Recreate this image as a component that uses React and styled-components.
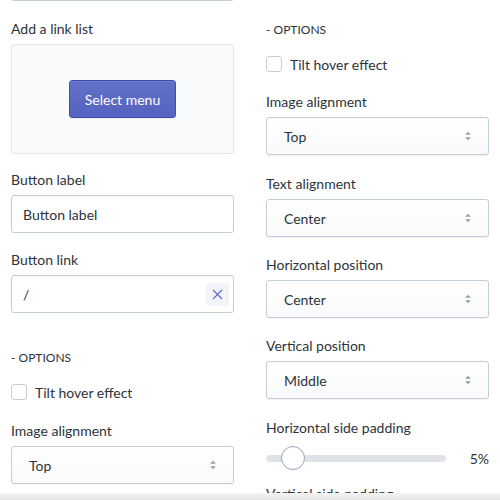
import styled, { createGlobalStyle } from 'styled-components';

const GlobalStyle = createGlobalStyle`
    html, body {
        margin: 0;
        padding: 0;
        background: #FFFFFF;
        overflow: hidden;
    }

    body {
        font-family: 'Lato', 'Open Sans', sans-serif;
        font-size: 14px;
        color: #2C333B;
    }

    * {
        box-sizing: border-box;
    }
`;

// slider position as a fraction of the track
const paddingFraction = 0.15;

export default function App() {
    return (
        <>
        <GlobalStyle />
        <Page>
            <Column>
                <CutField>
                    <TextBox />
                </CutField>
                <Field top={18}>
                    <Label>Add a link list</Label>
                    <LinkListBox>
                        <PrimaryButton>Select menu</PrimaryButton>
                    </LinkListBox>
                </Field>
                <Field top={16}>
                    <Label>Button label</Label>
                    <TextBox>Button label</TextBox>
                </Field>
                <Field top={17}>
                    <Label>Button link</Label>
                    <TextBox>
                        <span>/</span>
                        <ClearButton>
                            <svg width="11" height="11" viewBox="0 0 11 11">
                                <path d="M1 1 L10 10 M10 1 L1 10" stroke="#5C6AC4" strokeWidth="1.1" fill="none" />
                            </svg>
                        </ClearButton>
                    </TextBox>
                </Field>
                <Options top={35} />
                <SelectField top={19} label="Image alignment" value="Top" />
            </Column>
            <Column>
                <Options top={20} />
                <SelectField top={18} label="Image alignment" value="Top" />
                <SelectField top={19} label="Text alignment" value="Center" />
                <SelectField top={18} label="Horizontal position" value="Center" />
                <SelectField top={18} label="Vertical position" value="Middle" />
                <Field top={19}>
                    <Label>Horizontal side padding</Label>
                    <RangeRow>
                        <Track>
                            <Thumb style={{ left: `${paddingFraction * 100}%` }} />
                        </Track>
                        <RangeValue>5%</RangeValue>
                    </RangeRow>
                </Field>
                <Field top={11}>
                    <Label>Vertical side padding</Label>
                </Field>
            </Column>
        </Page>
        <BottomShade />
        </>
    );
}

function Options({ top }) {
    return (
        <OptionsBlock top={top}>
            <SectionTitle>- OPTIONS</SectionTitle>
            <CheckRow>
                <CheckBox />
                <span>Tilt hover effect</span>
            </CheckRow>
        </OptionsBlock>
    );
}

function SelectField({ top, label, value }) {
    return (
        <Field top={top}>
            <Label>{label}</Label>
            <SelectBox>
                <span>{value}</span>
                <svg width="8" height="12" viewBox="0 0 8 12">
                    <path d="M4 1.8 L6.8 4.8 L1.2 4.8 Z M4 10.2 L6.8 7.2 L1.2 7.2 Z" fill="#919EAB" />
                </svg>
            </SelectBox>
        </Field>
    );
}

const Page = styled.div`
    width: 500px;
    height: 500px;
    display: grid;
    grid-template-columns: 223px 223px;
    column-gap: 32px;
    padding: 0 11px;
    overflow: hidden;
`;

const Column = styled.div`
    display: flex;
    flex-direction: column;
`;

const CutField = styled.div`
    margin-top: -37px;
`;

const Field = styled.div`
    display: flex;
    flex-direction: column;
    gap: 5px;
    margin-top: ${props => props.top ?? 18}px;
`;

const Label = styled.div`
    height: 20px;
    line-height: 20px;
    font-size: 14px;
    color: #2C333B;
`;

const TextBox = styled.div`
    height: 38px;
    display: flex;
    align-items: center;
    justify-content: space-between;
    padding: 0 4px 0 11px;
    background: #FFFFFF;
    border: 1px solid #C4CDD5;
    border-radius: 3px;
    box-shadow: inset 0 1px 0 0 rgba(99, 115, 129, 0.05);
    font-size: 14px;
    color: #2C333B;
`;

const ClearButton = styled.div`
    width: 23px;
    height: 23px;
    display: flex;
    align-items: center;
    justify-content: center;
    background: #F3F4FA;
    border-radius: 3px;
`;

const LinkListBox = styled.div`
    height: 110px;
    display: flex;
    align-items: center;
    justify-content: center;
    background: #F9FAFB;
    border: 1px solid #E4E7EB;
    border-radius: 3px;
`;

const PrimaryButton = styled.button`
    width: 107px;
    height: 38px;
    background: linear-gradient(180deg, #6371C7, #5563C1);
    border: 1px solid #3F4EAE;
    border-radius: 3px;
    box-shadow: inset 0 1px 0 0 #6F7BCB, 0 1px 0 0 rgba(22, 29, 37, 0.05);
    font-family: 'Lato', 'Open Sans', sans-serif;
    font-size: 14px;
    color: #FFFFFF;
    padding: 0;
`;

const OptionsBlock = styled.div`
    display: flex;
    flex-direction: column;
    margin-top: ${props => props.top}px;
`;

const SectionTitle = styled.div`
    height: 20px;
    line-height: 20px;
    font-size: 12px;
    color: #2C333B;
`;

const CheckRow = styled.div`
    display: flex;
    align-items: center;
    gap: 8px;
    margin-top: 14px;
    height: 20px;
    font-size: 14px;
`;

const CheckBox = styled.div`
    width: 16px;
    height: 16px;
    background: #FFFFFF;
    border: 1px solid #C4CDD5;
    border-radius: 3px;
`;

const SelectBox = styled.div`
    height: 38px;
    display: flex;
    align-items: center;
    justify-content: space-between;
    padding: 0 16px 0 17px;
    background: linear-gradient(180deg, #FFFFFF, #F9FAFB);
    border: 1px solid #C4CDD5;
    border-radius: 3px;
    box-shadow: 0 1px 0 0 rgba(22, 29, 37, 0.05);
    font-size: 14px;
    color: #2C333B;
`;

const RangeRow = styled.div`
    height: 30px;
    display: flex;
    align-items: center;
    justify-content: space-between;
    gap: 24px;
`;

const Track = styled.div`
    position: relative;
    flex: 1;
    height: 7px;
    background: #DFE3E8;
    border-radius: 4px;
`;

const Thumb = styled.div`
    position: absolute;
    top: 50%;
    width: 24px;
    height: 24px;
    margin-left: -12px;
    transform: translateY(-50%);
    background: #FFFFFF;
    border: 1px solid #95A4BD;
    border-radius: 50%;
`;

const RangeValue = styled.div`
    font-size: 14px;
    color: #2C333B;
`;

const BottomShade = styled.div`
    position: fixed;
    left: 0;
    bottom: 0;
    width: 500px;
    height: 7px;
    background: linear-gradient(180deg, #F4F4F4, #E6E6E6);
`;
